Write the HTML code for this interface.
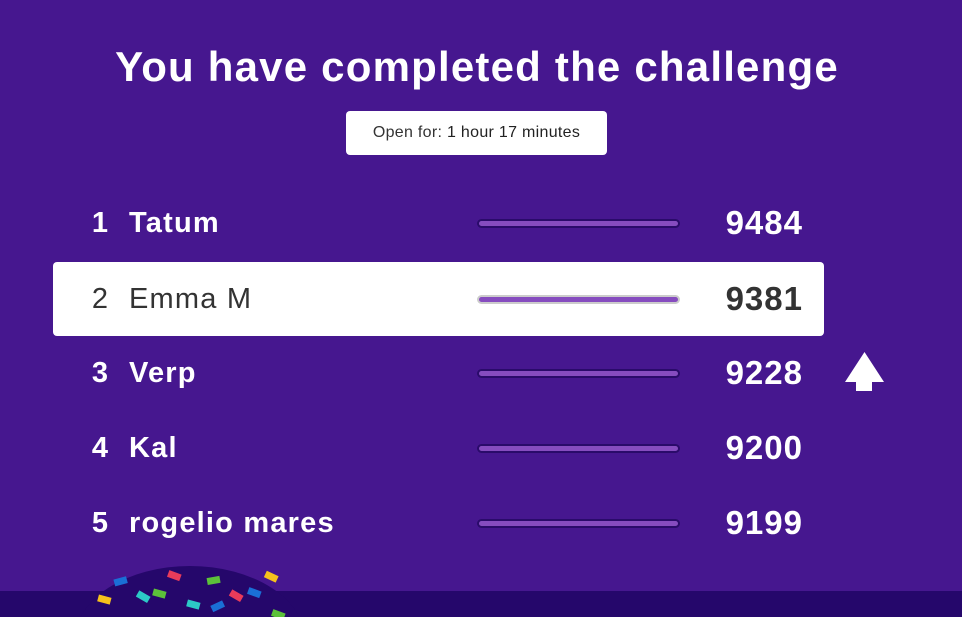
<!DOCTYPE html>
<html><head><style>
body{margin:0;width:962px;height:617px;overflow:hidden;background:#46178f;font-family:"Liberation Sans",sans-serif;position:relative}
h1{position:absolute;top:43px;left:0;width:954px;text-align:center;margin:0;color:#fff;font-size:42px;font-weight:bold;letter-spacing:1.2px}
.pill{position:absolute;left:346px;top:111px;width:261px;height:44px;background:#fff;border-radius:4px;font-size:16px;line-height:44px;text-align:center;color:#333;letter-spacing:0.3px}
.pill b{font-weight:normal;color:#222}
.row{position:absolute;left:53px;width:771px;height:74px;color:#fff;font-weight:bold}
.row.sel{background:#fff;color:#333;border-radius:4px}
.n{position:absolute;right:716px;top:0;line-height:74px;font-size:29px}
.nm{position:absolute;left:76px;line-height:74px;font-size:29px;letter-spacing:1.2px}
.bar{position:absolute;left:424px;top:33px;width:199px;height:5px;background:#864cbf;border:2px solid #2a0b6a;border-radius:5px}
.sel .bar{border-color:#ccc}
.sc{position:absolute;right:21px;line-height:74px;font-size:33px;letter-spacing:1px}
.bot{position:absolute;left:0;top:591px;width:962px;height:26px;background:#25076b}
</style></head><body>
<h1>You have completed the challenge</h1>
<div class="pill">Open for: <b>1 hour 17 minutes</b></div>
<div class="row" style="top:186px"><span class="n">1</span><span class="nm">Tatum</span><div class="bar"></div><span class="sc">9484</span></div>
<div class="row sel" style="top:262px"><span class="n" style="font-weight:normal">2</span><span class="nm" style="font-weight:normal">Emma M</span><div class="bar"></div><span class="sc">9381</span></div>
<div class="row" style="top:336px"><span class="n">3</span><span class="nm">Verp</span><div class="bar"></div><span class="sc">9228</span></div>
<div class="row" style="top:411px"><span class="n">4</span><span class="nm">Kal</span><div class="bar"></div><span class="sc">9200</span></div>
<div class="row" style="top:486px"><span class="n">5</span><span class="nm">rogelio mares</span><div class="bar"></div><span class="sc">9199</span></div>
<svg style="position:absolute;left:844px;top:351px" width="41" height="41"><polygon points="20.5,1 40,31 28,31 28,40 12,40 12,31 1,31" fill="#fff"/></svg>
<div class="bot"></div>
<svg style="position:absolute;left:0;top:560px" width="400" height="57">
<ellipse cx="190" cy="80" rx="115" ry="74" fill="#25076b"/>
<g transform="translate(0,-560)">
<rect x="114" y="578" width="13" height="7" fill="#1a6fd6" transform="rotate(-15 120 581)"/>
<rect x="168" y="572" width="13" height="7" fill="#e93b5a" transform="rotate(20 174 575)"/>
<rect x="207" y="577" width="13" height="7" fill="#5cc13a" transform="rotate(-10 213 580)"/>
<rect x="265" y="573" width="13" height="7" fill="#f6c21c" transform="rotate(25 271 576)"/>
<rect x="98" y="596" width="13" height="7" fill="#f6c21c" transform="rotate(15 104 599)"/>
<rect x="137" y="593" width="13" height="7" fill="#2cc9c6" transform="rotate(30 143 596)"/>
<rect x="153" y="590" width="13" height="7" fill="#5cc13a" transform="rotate(15 159 593)"/>
<rect x="187" y="601" width="13" height="7" fill="#2cc9c6" transform="rotate(15 193 604)"/>
<rect x="211" y="603" width="13" height="7" fill="#1a6fd6" transform="rotate(-25 217 606)"/>
<rect x="230" y="592" width="13" height="7" fill="#e93b5a" transform="rotate(30 236 595)"/>
<rect x="248" y="589" width="13" height="7" fill="#1a6fd6" transform="rotate(20 254 592)"/>
<rect x="272" y="611" width="13" height="7" fill="#5cc13a" transform="rotate(20 278 614)"/>
</g>
</svg>
</body></html>
